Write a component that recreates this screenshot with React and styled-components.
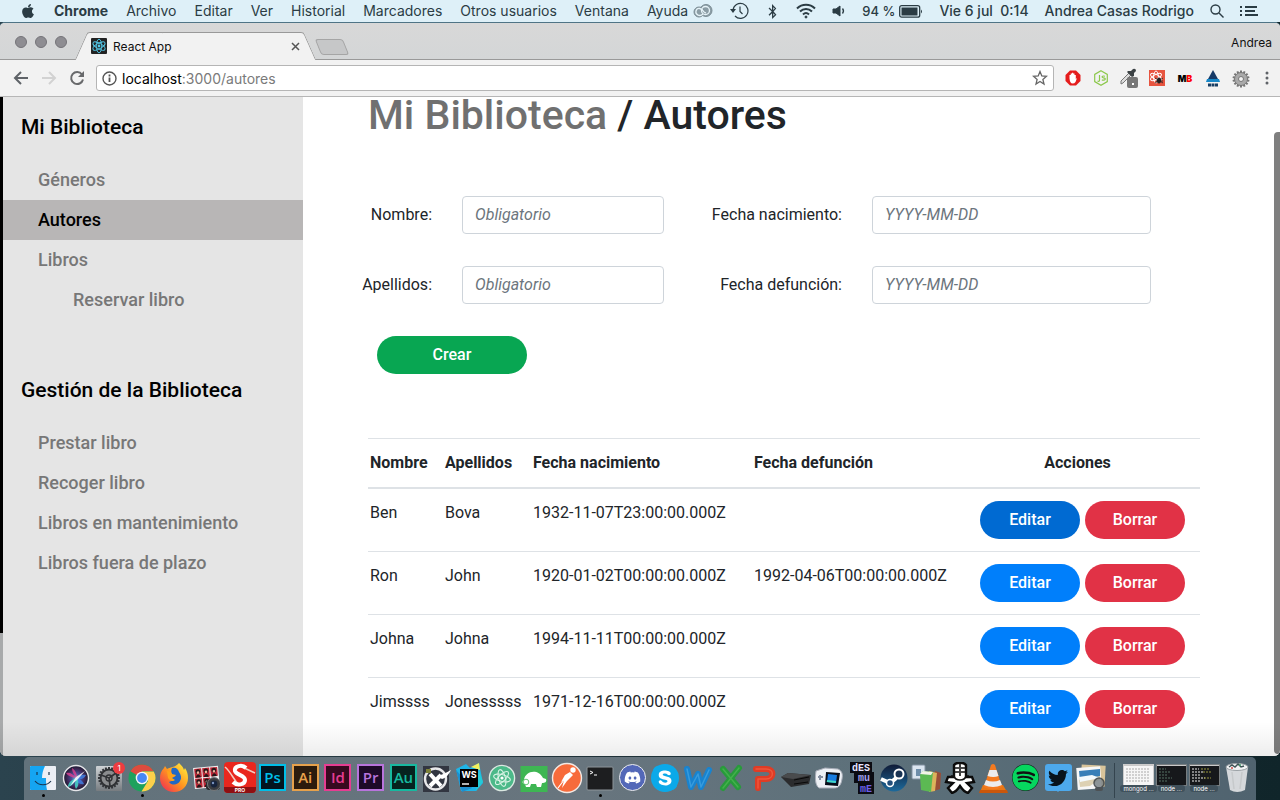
import React from "react";
import styled, { createGlobalStyle, css } from "styled-components";
import { FaApple, FaBluetoothB, FaDiscord, FaSkype, FaSpotify, FaTwitter } from "react-icons/fa";

const uiFont = `Inter, "Liberation Sans", sans-serif`;
const pageFont = `Roboto, "Liberation Sans", sans-serif`;

const GlobalStyle = createGlobalStyle`
  *, *::before, *::after { box-sizing: border-box; }
  body { margin: 0; background: #22343b; }
  button, input { font: inherit; }
  a { color: inherit; text-decoration: none; }
`;

const Desktop = styled.div`
  display: flex;
  flex-direction: column;
  min-height: 100vh;
  overflow: hidden;
  font-family: ${uiFont};
  background: linear-gradient(90deg, #2b434e, #22343b 40%, #10252a);
`;

/* ---------- system menu bar ---------- */

const MenuBar = styled.header`
  display: flex;
  justify-content: space-between;
  align-items: center;
  height: 22px;
  padding: 0 22px 0 20px;
  background: #def0f8;
  color: #2b3c44;
  font-size: 14px;
  font-weight: 500;
  line-height: 22px;
  white-space: nowrap;
  svg { display: block; flex: none; }
`;

const MenuGroup = styled.nav`
  display: flex;
  align-items: center;
  gap: ${(p) => p.$gap}px;
`;

const MenuItem = styled.button`
  padding: 0;
  border: 0;
  background: none;
  color: inherit;
  line-height: 22px;
  font-weight: ${(p) => p.$weight || 500};
`;

const Battery = styled.span`
  display: flex;
  align-items: center;
  gap: 4px;
  font-size: 13px;
`;

/* ---------- browser window ---------- */

const BrowserWindow = styled.div`
  position: relative;
  display: flex;
  flex: 1;
  flex-direction: column;
  margin-bottom: 1px;
  overflow: hidden;
  border-top: 1px solid #4f7486;
  border-radius: 5px 5px 6px 6px;
  background: #f2f2f2;
`;

const TabStrip = styled.div`
  display: flex;
  align-items: flex-end;
  height: 37px;
  padding-left: 15px;
  border-bottom: 1px solid #999;
  background: linear-gradient(#d8d8d8, #d4d6d7);
`;

const Lights = styled.div`
  display: flex;
  gap: 8px;
  margin-bottom: 11px;
  span {
    width: 12px;
    height: 12px;
    border: 1px solid #747378;
    border-radius: 50%;
    background: #8e8d92;
  }
`;

const Tab = styled.div`
  position: relative;
  display: flex;
  align-items: center;
  width: 229px;
  height: 28px;
  margin: 0 0 -1px 14px;
  padding: 0 8px 0 10px;
  font-size: 12px;
  &::before, &::after {
    content: "";
    position: absolute;
    top: 0;
    bottom: 0;
    width: 62%;
    border-top: 1px solid #999;
    background: #f2f2f2;
  }
  &::before { left: 0; border-left: 1px solid #999; border-top-left-radius: 3px; transform: skewX(-24deg); }
  &::after { right: 0; border-right: 1px solid #999; border-top-right-radius: 3px; transform: skewX(24deg); }
  > * { position: relative; z-index: 1; }
`;

const TabTitle = styled.span`
  flex: 1;
  margin-left: 6px;
  color: #111;
`;

const BareButton = styled.button`
  display: grid;
  place-items: center;
  flex: none;
  width: ${(p) => p.$w || 16}px;
  height: ${(p) => p.$h || 16}px;
  padding: 0;
  border: 0;
  background: none;
  svg { display: block; }
`;

const NewTab = styled.button`
  width: 28px;
  height: 16px;
  margin: 0 0 4px 8px;
  padding: 0;
  border: 1px solid #a5a5a5;
  border-radius: 3px;
  background: #c6c7c8;
  transform: skewX(22deg);
`;

const Profile = styled.span`
  margin: 0 8px 8px auto;
  color: #111;
  font-size: 12px;
  line-height: 16px;
`;

const Toolbar = styled.div`
  display: flex;
  align-items: center;
  height: 37px;
  padding: 0 7px 0 12px;
  border-bottom: 1px solid #b6b6b6;
  background: #f2f2f2;
`;

const NavButtons = styled.div`
  display: flex;
  gap: 10px;
  margin-right: 10px;
`;

const Address = styled.div`
  display: flex;
  flex: 1;
  align-items: center;
  height: 26px;
  padding: 0 5px;
  border: 1px solid #b5b5b5;
  border-radius: 3px;
  background: #fff;
  font-size: 14px;
`;

const Url = styled.span`
  flex: 1;
  margin-left: 5px;
  color: #7a7a7a;
  b { color: #000; font-weight: 400; }
`;

const Extensions = styled.div`
  display: flex;
  align-items: center;
  gap: 8px;
  margin: 0 -2px 0 9px;
`;

const MbBadge = styled.span`
  color: #000;
  font-size: 9px;
  font-weight: 900;
  b { color: #f00; font-weight: 900; }
`;

/* ---------- web page ---------- */

const Page = styled.div`
  position: relative;
  display: flex;
  flex: 1;
  padding-left: 3px;
  background: linear-gradient(#000 81.3%, #a8aaab 81.3%);
  font-family: ${pageFont};
  font-size: 16px;
  line-height: 24px;
  color: #212529;
  &::after {
    content: "";
    position: absolute;
    inset: auto 0 0 0;
    height: 34px;
    background: linear-gradient(transparent, rgba(0, 0, 0, 0.07));
    pointer-events: none;
  }
`;

const Sidebar = styled.aside`
  flex: none;
  width: 300px;
  background: #e5e5e5;
`;

const SideSection = styled.nav`
  margin-bottom: 40px;
  ul { margin: 0; padding: 0; list-style: none; }
`;

const SideHeading = styled.h2`
  margin: 0;
  padding: 0 18px 3px;
  color: #000;
  font-size: 21px;
  font-weight: 500;
  line-height: 60px;
`;

const SideLink = styled.a`
  display: block;
  padding-left: ${(p) => (p.$nested ? 70 : 35)}px;
  font-size: 18px;
  font-weight: 500;
  line-height: 40px;
  color: ${(p) => (p.$active ? "#000" : "#777")};
  background: ${(p) => (p.$active ? "#b8b6b6" : "transparent")};
`;

const Main = styled.main`
  flex: 1;
  min-width: 0;
  padding: 0 80px 12px 59px;
  background: #fff;
`;

const Title = styled.h1`
  margin: 0 0 63px 6px;
  font-size: 41px;
  font-weight: 500;
  line-height: 36px;
  a { color: #707070; }
`;

const Form = styled.form`
  display: grid;
  grid-template-columns: 70px minmax(0, 202px) 148px minmax(0, 279px);
  gap: 32px 30px;
  align-items: center;
`;

const Label = styled.label`
  text-align: right;
  white-space: nowrap;
`;

const Field = styled.input`
  width: 100%;
  height: 38px;
  padding: 0 12px 2px;
  border: 1px solid #ced4da;
  border-radius: 4px;
  background: #fff;
  color: #495057;
  &::placeholder { color: #6c757d; font-style: italic; opacity: 1; }
`;

const tones = {
  green: "#08a652",
  blue: "#007ffb",
  focus: "#006ad2",
  red: "#e13246",
};

const Pill = styled.button`
  width: ${(p) => (p.$wide ? 150 : 100)}px;
  height: 38px;
  padding: 0;
  border: 0;
  border-radius: 19px;
  background: ${(p) => tones[p.$tone]};
  color: #fff;
  font-weight: 500;
  ${(p) => p.$wide && css`
    grid-column: 1 / -1;
    margin-left: 15px;
  `}
`;

const Table = styled.table`
  width: calc(100% - 6px);
  margin: 64px 0 0 6px;
  border-spacing: 0;
  table-layout: fixed;
  white-space: nowrap;
  th, td {
    padding: 12px 2px;
    border-top: 1px solid #dee2e6;
    text-align: left;
    vertical-align: top;
  }
  th { border-bottom: 2px solid #dee2e6; font-weight: 700; }
  th:last-child { padding-right: 12px; text-align: center; }
  tbody tr:first-child td { border-top: 0; }
`;

const Col = styled.col`
  width: ${(p) => (p.$w ? `${p.$w}px` : "auto")};
`;

const Actions = styled.div`
  display: flex;
  justify-content: center;
  gap: 5px;
`;

const ScrollThumb = styled.div`
  position: absolute;
  top: 35px;
  right: 0;
  bottom: 2px;
  width: 6px;
  border-radius: 4px 0 0 4px;
  background: #7f7f7f;
`;

/* ---------- dock ---------- */

const DockBar = styled.footer`
  display: flex;
  height: 43px;
  margin: 0 24px;
  padding: 0 3px;
  border-radius: 5px 5px 0 0;
  background: linear-gradient(90deg, #62727b, #68757e 45%, #5c707a 70%, #50636f);
`;

const DockItem = styled.div`
  position: relative;
  display: flex;
  flex: 1 1 0;
  justify-content: center;
  padding-top: 5px;
  min-width: 0;
  > svg { flex: none; width: 32px; height: 32px; }
  ${(p) => p.$running && css`
    &::after {
      content: "";
      position: absolute;
      bottom: 3px;
      left: 50%;
      width: 3px;
      height: 3px;
      margin-left: -1px;
      border-radius: 50%;
      background: #000;
    }
  `}
`;

const DockDivider = styled.div`
  width: 1px;
  margin: 6px 7px 2px;
  background: #34444e;
`;

const AdobeTile = styled.span`
  width: 27px;
  height: 27px;
  margin-top: 2px;
  border: 2px solid ${(p) => p.$fg};
  background: ${(p) => p.$bg};
  color: ${(p) => p.$fg};
  font-family: "Open Sans", sans-serif;
  font-size: 15px;
  font-weight: 600;
  line-height: 22px;
  text-align: center;
`;

const DockBadge = styled.span`
  position: absolute;
  top: 5px;
  right: 0;
  width: 12px;
  height: 12px;
  border-radius: 50%;
  background: #ee3c40;
  color: #fff;
  font-size: 8px;
  line-height: 12px;
  text-align: center;
`;

const Round = styled.span`
  display: grid;
  place-items: center;
  width: 27px;
  height: 27px;
  margin-top: 2px;
  border: ${(p) => (p.$ring ? 1 : 0)}px solid #eee;
  border-radius: ${(p) => (p.$square ? 3 : 14)}px;
  background: ${(p) => p.$bg};
  color: #fff;
  svg { display: block; }
`;

const SpeechTail = styled.span`
  position: absolute;
  top: 31px;
  border: 4px solid transparent;
  border-top-color: #4da9ec;
`;

const SkypeTile = styled.span`
  display: grid;
  place-items: center;
  width: 28px;
  height: 28px;
  margin-top: 2px;
  border-radius: 50%;
  background: radial-gradient(#fff 50%, #0ba9e9 52%);
  svg { display: block; }
`;

const MiniWindow = styled.span`
  display: flex;
  flex-direction: column;
  align-items: center;
  width: 31px;
  padding-top: 2px;
  svg { display: block; width: 31px; height: 22px; }
  small {
    margin-top: -1px;
    padding: 0 3px;
    border-radius: 3px;
    background: #40515c;
    color: #fff;
    font-size: 6px;
    line-height: 7px;
    white-space: nowrap;
  }
`;

/* ---------- drawings ---------- */

const ReactMark = ({ size = 16, bg = "#222", fg = "#53c8e8" }) => (
  <svg width={size} height={size} viewBox="0 0 16 16">
    <rect width="16" height="16" rx="1" fill={bg} />
    <g fill="none" stroke={fg} strokeWidth="0.9">
      {[30, 90, 150].map((a) => (
        <ellipse key={a} cx="8" cy="8" rx="6.8" ry="2.7" transform={`rotate(${a} 8 8)`} />
      ))}
    </g>
    <circle cx="8" cy="8" r="1.4" fill={fg} />
  </svg>
);

const gear = (cx, cy, r, n) =>
  Array.from({ length: n }, (_, i) => (
    <rect key={i} x={cx - 1} y={cy - r} width="2" height="3" transform={`rotate(${(i * 360) / n} ${cx} ${cy})`} />
  ));

const Finder = () => (
  <svg viewBox="0 0 32 32">
    <rect x="3" y="4" width="26" height="24" rx="1" fill="#eceff5" />
    <path d="M4 4h14c-2 4-3 8-3 12h4c0 4 0 8 1 12H4a1 1 0 0 1-1-1V5a1 1 0 0 1 1-1z" fill="#15a5f2" />
    <path d="M10 10v3M22 10v3M8 19c4 5 12 5 16 0" fill="none" stroke="#18344e" strokeWidth="1.2" />
  </svg>
);

const Siri = () => (
  <svg viewBox="0 0 32 32">
    <defs>
      <radialGradient id="siri">
        <stop offset="0" stopColor="#7fc4e0" /><stop offset=".35" stopColor="#4a4f9a" /><stop offset=".75" stopColor="#3a2450" /><stop offset="1" stopColor="#151a2c" />
      </radialGradient>
    </defs>
    <circle cx="16" cy="16" r="12.5" fill="url(#siri)" stroke="#e6e6ea" strokeWidth="1.4" />
    <path d="M6 11c4-1 7 1 10 5-5-1-8-2-10-5zM12 6c3 2 5 5 5 10-3-3-5-6-5-10z" fill="#d8418f" opacity=".85" />
    <path d="M26 13c-2 4-5 5-10 4 3-3 6-5 10-4zM24 22c-4 1-7-1-8-6 4 1 7 3 8 6z" fill="#3f7de0" opacity=".85" />
    <path d="M8 25c0-4 3-7 8-9-1 5-4 8-8 9zM16 27c-2-4-1-7 1-11 2 4 2 8-1 11z" fill="#45d6c8" opacity=".85" />
    <path d="M10 24l6-9 9-6-7 8z" fill="#fff" opacity=".85" />
  </svg>
);

const Settings = () => (
  <svg viewBox="0 0 32 32">
    <defs><linearGradient id="prefs" x1="0" y1="0" x2="0" y2="1"><stop stopColor="#cfd3d6" /><stop offset="1" stopColor="#777c80" /></linearGradient></defs>
    <rect x="3" y="4" width="26" height="25" rx="1" fill="url(#prefs)" />
    <g fill="#33363a">{gear(16, 16, 11, 20)}</g>
    <circle cx="16" cy="16" r="8.5" fill="#8a8c8e" stroke="#303235" strokeWidth="2" />
    <circle cx="16" cy="16" r="3" fill="#999" stroke="#303235" strokeWidth="1.4" />
    <path d="M16 16L8 13M16 16l7-5M16 16l1 8" stroke="#303235" strokeWidth="1.7" />
  </svg>
);

const Chrome = () => (
  <svg viewBox="0 0 32 32">
    <circle cx="16" cy="16" r="13.5" fill="#1ea15d" />
    <path d="M16 16L4.3 9.3A13.5 13.5 0 0 1 27.7 9.3H16z" fill="#dd4b3e" />
    <path d="M16 9.5h11.8A13.5 13.5 0 0 1 15.5 29.5L22 19z" fill="#fdd04b" />
    <circle cx="16" cy="16" r="6.3" fill="#f5f5f5" />
    <circle cx="16" cy="16" r="4.9" fill="#4688f4" />
  </svg>
);

const Firefox = () => (
  <svg viewBox="0 0 32 32">
    <defs><linearGradient id="fox" x1="1" y1="0" x2="0" y2="1"><stop offset=".1" stopColor="#ffe53a" /><stop offset=".5" stopColor="#ff9420" /><stop offset="1" stopColor="#ee1f5b" /></linearGradient></defs>
    <path d="M21 1c3 3 4 4 5 7l1-2c2 3 3 6 3 10 0 8-6 14-14 14S2 24 2 16c0-4 1-7 4-10l1-2 2 3c4-2 9-2 12-6z" fill="url(#fox)" />
    <path d="M14 6c4-1 6 1 7 4 2 3 3 6 1 9-2 4-8 5-11 1l5-2c-3 0-5-2-5-4l3-2c-1-2-1-4 0-6z" fill="#2268c4" />
    <path d="M9 9c3 0 4 1 5 3l4 1c-1 2-3 2-4 3l3 2c-2 2-5 1-7-2z" fill="#ffa21c" />
  </svg>
);

const PhotoBooth = () => (
  <svg viewBox="0 0 32 32">
    <g transform="rotate(-5 14 16)">
      <rect x="3" y="5" width="25" height="21" fill="#eee" />
      {[[4, 6], [12, 6], [20, 6], [4, 16], [12, 16]].map(([x, y]) => (
        <g key={`${x}-${y}`}><rect x={x} y={y} width="7" height="9" fill="#bd2635" /><circle cx={x + 3.5} cy={y + 3} r="2.4" fill="#241719" /><circle cx={x + 3.5} cy={y + 4} r="1.3" fill="#edb49d" /><path d={`M${x + 1} ${y + 9}c1-4 4-4 5 0z`} fill="#241719" /></g>
      ))}
    </g>
    <rect x="15" y="18" width="14" height="10" rx="3" fill="#292b2e" />
    <circle cx="23" cy="22" r="6.5" fill="#3a3c40" stroke="#76797c" />
    <circle cx="23" cy="22" r="3.4" fill="#17243d" /><circle cx="22" cy="21" r="1.2" fill="#7994c0" />
  </svg>
);

const SketchPro = () => (
  <svg viewBox="0 0 32 32">
    <rect x="0" y="0" width="32" height="31" rx="4" fill="#e9271e" />
    <path d="M0 25h32v2a4 4 0 0 1-4 4H4a4 4 0 0 1-4-4z" fill="#8f0f12" />
    <path d="M1 5c6 5 8 12 14 18M18 5l13 6" stroke="#f3ccc0" strokeWidth="1.5" fill="none" />
    <path d="M22 6c-4-4-12-2-11 3 1 4 10 4 10 9 0 5-8 6-12 2" stroke="#fff" strokeWidth="4" fill="none" />
    <text x="16" y="30" fill="#fff" fontSize="5" fontWeight="700" textAnchor="middle" fontFamily="Inter, sans-serif">PRO</text>
  </svg>
);

const Xmark = () => (
  <svg viewBox="0 0 32 32">
    <rect x="3" y="4" width="26" height="26" fill="#323641" />
    <circle cx="15.5" cy="17" r="10.5" fill="none" stroke="#e8e8ea" strokeWidth="2.4" />
    <path d="M10 12l11 12M21 13L10 24" stroke="#fff" strokeWidth="4" />
    <path d="M17 14c5-1 9-3 14-6-2 4-5 8-9 9z" fill="#fff" />
    <rect x="6" y="7" width="5" height="4" fill="#7d8138" />
  </svg>
);

const WebStorm = () => (
  <svg viewBox="0 0 32 32">
    <path d="M3 7l10-5 4 4 9-5 4 20-7 8H8z" fill="#1fb4e6" /><path d="M18 5l8-4 1 7z" fill="#f3f05b" /><path d="M3 8l6 22 10-4z" fill="#1c8fd0" /><path d="M26 8l4 12-7 9z" fill="#23cbd7" />
    <rect x="7" y="7" width="18" height="18" fill="#000" />
    <text x="16" y="16" fill="#fff" fontSize="9" fontWeight="700" textAnchor="middle" fontFamily="Inter, sans-serif">WS</text>
    <path d="M9 22h7" stroke="#fff" strokeWidth="1.4" />
  </svg>
);

const Atom = () => (
  <svg viewBox="0 0 32 32">
    <circle cx="16" cy="16" r="12.6" fill="#4cb989" stroke="#dce9e2" strokeWidth="1.4" />
    <g fill="none" stroke="#d9f3e5" strokeWidth="1.1">{[15, 75, 135].map((a) => <ellipse key={a} cx="16" cy="16" rx="8.6" ry="3.4" transform={`rotate(${a} 16 16)`} />)}</g>
    <circle cx="16" cy="16" r="1.6" fill="#fff" />
  </svg>
);

const Tortoise = () => (
  <svg viewBox="0 0 32 32">
    <rect x="2.5" y="4" width="27" height="26" fill="#3eb653" />
    <path d="M6 18c1-9 14-12 19-2l3 1c1 3-1 4-4 4l-1 4h-4l-1-3h-5l-1 3H8l-1-3c-3 0-3-3-1-4z" fill="#fff" />
    <circle cx="8" cy="20" r="2.8" fill="#fff" stroke="#3eb653" strokeWidth=".8" />
  </svg>
);

const Postman = () => (
  <svg viewBox="0 0 32 32">
    <circle cx="16" cy="16" r="14.5" fill="#f76b3b" stroke="#f3e9e4" strokeWidth="1.4" />
    <circle cx="22" cy="8" r="2.7" fill="#fff" />
    <path d="M19 10l3 3-6 6-5 7 2-8-3 2 4-7z" fill="#fff" /><path d="M13 18l-6 8M20 13l-7 6" stroke="#fff" strokeWidth="1.2" />
  </svg>
);

const Terminal = () => (
  <svg viewBox="0 0 32 32">
    <rect x="3" y="5" width="26" height="23" rx="1" fill="#1d1e20" stroke="#8e959a" />
    <path d="M6 9l3 1.5-3 1.5M10 13h3" stroke="#fff" fill="none" />
  </svg>
);

const Letter = ({ kind }) => {
  const shapes = {
    W: ["#1883cf", "#56b4ec", "M5 7l4 18 7-13 3 13 8-17"],
    X: ["#289b3b", "#5ec85b", "M8 7l15 18M24 6L8 26"],
    P: ["#e03c25", "#fb7253", "M8 7h10c9 0 8 10 0 10h-8v9"],
  };
  const [dark, light, d] = shapes[kind];
  return (
    <svg viewBox="0 0 32 32" fill="none" strokeLinejoin="round" strokeLinecap="round">
      <path d={d} stroke={dark} strokeWidth="6" /><path d={d} stroke={light} strokeWidth="1.5" opacity=".5" />
    </svg>
  );
};

const BlackBox = () => (
  <svg viewBox="0 0 32 32"><path d="M1 15l7-4 23 2-2 9-18 3z" fill="#2b2c2e" /><path d="M1 15l7-4 23 2-18 4z" fill="#494b4d" /><path d="M14 18l15-3M14 22l14-2" stroke="#090909" /></svg>
);

const GameBoy = () => (
  <svg viewBox="0 0 32 32">
    <path d="M3 9l9-3 13 1c4 2 5 5 4 10-1 7-4 9-8 9H6c-4-3-4-10-3-17z" fill="#edf0f5" stroke="#a8adb8" />
    <path d="M13 10l14 1-2 13-13-1z" fill="#080d19" /><path d="M15 12l9 1-1 8-9-1z" fill="#167be0" /><path d="M14 18l9 1-.3 2-9-1z" fill="#44d8c5" />
    <path d="M7 13v5M5 15h5" stroke="#8690a2" strokeWidth="2" />
  </svg>
);

const Desmume = () => (
  <svg viewBox="0 0 32 32" fontFamily="Liberation Mono, monospace" fontWeight="700" textAnchor="middle">
    <path d="M4 0h22v10h2v22H12V21H8V11H4z" fill="#0b0b12" />
    <text x="15" y="9" fill="#e6e4ff" fontSize="10">dES</text><text x="18" y="19" fill="#a8a1f0" fontSize="10">mu</text><text x="20" y="30" fill="#6d60ea" fontSize="10">mE</text>
  </svg>
);

const Steam = () => (
  <svg viewBox="0 0 32 32">
    <defs><linearGradient id="steam" x1="0" y1="0" x2="0" y2="1"><stop stopColor="#101b37" /><stop offset="1" stopColor="#1d6a9c" /></linearGradient></defs>
    <circle cx="16" cy="16" r="13.5" fill="url(#steam)" />
    <path d="M3 17l9 4 5-4 3-4" stroke="#fff" strokeWidth="4" fill="none" />
    <circle cx="21" cy="12" r="4.5" fill="#183354" stroke="#fff" strokeWidth="2" /><circle cx="12" cy="21" r="3.5" fill="#224f7c" stroke="#fff" strokeWidth="1.5" />
  </svg>
);

const Books = () => (
  <svg viewBox="0 0 32 32">
    <rect x="1" y="3" width="13" height="14" rx="1" fill="#dbe5f0" stroke="#8291a1" /><rect x="5" y="7" width="5" height="7" fill="#6f8eaa" />
    <path d="M24 9l6 2-1 16-6 2z" fill="#994e37" /><path d="M18 9l8 2-2 18-6 1z" fill="#dcb35b" />
    <path d="M9 13l3-4 10 1-2 20-10-2z" fill="#5cb953" /><path d="M12 9l10 1-2 3-11-1z" fill="#f3f3e8" />
  </svg>
);

const BeardedSpice = () => (
  <svg viewBox="0 0 32 32">
    <path d="M10 3c2-3 10-3 12 0v12h6l2 5-7 1 5 5-4 5c-4-1-6-4-8-7-2 3-4 6-8 7l-4-5 5-5-7-1 2-5h6z" fill="#fff" stroke="#0b0b0b" strokeWidth="2.4" />
    <path d="M10 6h5M17 6h5M10 10h5M17 10h5M7 14h3q1 4 6 4t6-4h3M16 1v13" stroke="#111" strokeWidth="1.6" fill="none" />
  </svg>
);

const Vlc = () => (
  <svg viewBox="0 0 32 32">
    <path d="M6 23h20l4 7H3z" fill="#e97716" /><path d="M14 3q2-2 4 0l7 22q-9 5-18 0z" fill="#f47a1f" />
    <path d="M12.5 8h7l2 6q-5 2-11 0zM9 18q7 3 14 0l2 5q-9 4-18 0z" fill="#ececec" /><path d="M3 28h27l1 3H2z" fill="#ca570b" />
  </svg>
);

const Preview = () => (
  <svg viewBox="0 0 32 32">
    <rect x="6" y="3" width="24" height="21" fill="#d9c49a" transform="rotate(3 16 16)" /><rect x="2" y="5" width="24" height="22" fill="#f7f7f7" transform="rotate(-4 16 16)" />
    <path d="M4 9l21-2v10L5 19z" fill="#397fb8" /><path d="M4 18l21-4v3l-10 7-10 1z" fill="#ddd1b3" /><path d="M4 15l13-2 8 3-20 4z" fill="#f4fafd" />
    <circle cx="24" cy="21" r="5" fill="#7b8387" opacity=".85" stroke="#3a4044" strokeWidth="1.5" /><rect x="20" y="25" width="8" height="4" rx="2" fill="#4d5255" />
  </svg>
);

const Trash = () => (
  <svg viewBox="0 0 32 32">
    <path d="M5 5h22l-3 23q-8 4-15 0z" fill="#dcdee0" opacity=".95" /><path d="M11 10l2 17M21 10l-2 17" stroke="#c6c9cb" strokeWidth="1.5" />
    <ellipse cx="16" cy="5" rx="11" ry="3.5" fill="#f3f4f5" stroke="#9ba1a5" /><path d="M8 5l3-2 3 2 3-3 3 3 3-1" stroke="#3f5356" fill="none" strokeWidth="1.5" /><circle cx="19" cy="3" r="1" fill="#43a36b" /><circle cx="11" cy="6" r="1" fill="#ce4e49" />
  </svg>
);

const Thumb = ({ light, label, tinted }) => (
  <MiniWindow>
    <svg viewBox="0 0 31 22">
      <rect x=".5" y=".5" width="30" height="21" fill={light ? "#f6f6f6" : "#16181b"} stroke={light ? "#ccc" : "#777d80"} />
      <path d="M1 1.5h29" stroke="#c9c9c9" />
      {[5, 8, 11, 14, 17].map((y, i) => (
        <path key={y} d={`M3 ${y}h${light ? 24 : 7 + ((i * 5) % 9)}`} stroke={light ? "#aaa" : tinted ? "#eee" : "#557065"} strokeDasharray="2 1" />
      ))}
      {tinted && <path d="M12 5h8M14 8h9M15 14h7" stroke="#98963e" strokeDasharray="2 1" />}
    </svg>
    <small>{label}</small>
  </MiniWindow>
);

/* ---------- data ---------- */

const menus = ["Archivo", "Editar", "Ver", "Historial", "Marcadores", "Otros usuarios", "Ventana", "Ayuda"];

const authors = [
  ["Ben", "Bova", "1932-11-07T23:00:00.000Z", ""],
  ["Ron", "John", "1920-01-02T00:00:00.000Z", "1992-04-06T00:00:00.000Z"],
  ["Johna", "Johna", "1994-11-11T00:00:00.000Z", ""],
  ["Jimssss", "Jonesssss", "1971-12-16T00:00:00.000Z", ""],
];

const dock = [
  { el: <Finder />, running: true },
  { el: <Siri /> },
  { el: <><Settings /><DockBadge>1</DockBadge></> },
  { el: <Chrome />, running: true },
  { el: <Firefox /> },
  { el: <PhotoBooth /> },
  { el: <SketchPro /> },
  { el: <AdobeTile $fg="#00bfe8" $bg="#03151f">Ps</AdobeTile> },
  { el: <AdobeTile $fg="#e6a14c" $bg="#2b1b0d">Ai</AdobeTile> },
  { el: <AdobeTile $fg="#e63d92" $bg="#370a20">Id</AdobeTile> },
  { el: <AdobeTile $fg="#b874dc" $bg="#1d0a29">Pr</AdobeTile> },
  { el: <AdobeTile $fg="#17b9a0" $bg="#06231f">Au</AdobeTile> },
  { el: <Xmark /> },
  { el: <WebStorm /> },
  { el: <Atom /> },
  { el: <Tortoise /> },
  { el: <Postman /> },
  { el: <Terminal />, running: true },
  { el: <Round $bg="#5368b8" $ring><FaDiscord size={17} /></Round> },
  { el: <SkypeTile><FaSkype size={28} color="#0ba9e9" /></SkypeTile> },
  { el: <Letter kind="W" /> },
  { el: <Letter kind="X" /> },
  { el: <Letter kind="P" /> },
  { el: <BlackBox /> },
  { el: <GameBoy /> },
  { el: <Desmume /> },
  { el: <Steam /> },
  { el: <Books /> },
  { el: <BeardedSpice /> },
  { el: <Vlc /> },
  { el: <Round $bg="#111"><FaSpotify size={27} color="#06d65f" /></Round> },
  { el: <><Round $bg="#4da9ec" $square><FaTwitter size={20} color="#08131c" /></Round><SpeechTail /></> },
  { el: <Preview /> },
];

/* ---------- components ---------- */

function SystemBar() {
  return (
    <MenuBar>
      <MenuGroup $gap={18}>
        <FaApple size={16} />
        <MenuItem $weight={700}>Chrome</MenuItem>
        {menus.map((m) => <MenuItem key={m} $weight={400}>{m}</MenuItem>)}
      </MenuGroup>
      <MenuGroup $gap={16}>
        <svg width="20" height="16" viewBox="0 0 20 16" fill="none" stroke="#7c8e96">
          <circle cx="13" cy="7.5" r="6" fill="#8b9da5" /><circle cx="6" cy="9" r="5" fill="#8b9da5" />
          <circle cx="12.5" cy="7.5" r="4" stroke="#e6f3f8" strokeWidth="1.3" /><path d="M10 11C7 14 2 12 3 8s6-3 8 1l2 1" stroke="#e6f3f8" strokeWidth="1.3" />
        </svg>
        <svg width="20" height="18" viewBox="0 0 20 18" fill="none" stroke="currentColor" strokeWidth="1.2">
          <path d="M4 8a7.500 7.500 0 1 1 2 6M11 4.500v5l2.500 2.500" /><path d="M1 7l3 4 3-4z" fill="currentColor" stroke="none" />
        </svg>
        <FaBluetoothB size={15} />
        <svg width="20" height="16" viewBox="0 0 20 16" fill="none" stroke="currentColor" strokeWidth="2">
          <path d="M1 5.5c5-5 13-5 18 0M4 8.500c3.500-3.500 8.500-3.500 12 0M7 11.500c2-2 4-2 6 0" /><circle cx="10" cy="14" r="1" fill="currentColor" strokeWidth="1" />
        </svg>
        <svg width="14" height="14" viewBox="0 0 14 14" fill="none" stroke="currentColor">
          <path d="M1 5h3l4-3v10l-4-3H1z" fill="currentColor" /><path d="M10.5 4.5q2 2.500 0 5" strokeWidth="1.3" />
        </svg>
        <Battery>
          94 %
          <svg width="24" height="13" viewBox="0 0 24 13"><rect x=".7" y=".7" width="20" height="11.5" rx="2" fill="none" stroke="currentColor" strokeWidth="1.3" /><rect x="2.5" y="2.5" width="16" height="8" fill="currentColor" /><path d="M22 4.500q2 2 0 4z" fill="currentColor" /></svg>
        </Battery>
        <MenuItem>Vie 6 jul&nbsp; 0:14</MenuItem>
        <MenuItem>Andrea Casas Rodrigo</MenuItem>
        <svg width="14" height="14" viewBox="0 0 14 14" fill="none" stroke="currentColor" strokeWidth="1.4"><circle cx="5.5" cy="5.5" r="4.5" /><path d="M9 9l4.500 4.500" /></svg>
        <svg width="18" height="12" viewBox="0 0 18 12" stroke="currentColor" strokeWidth="2"><path d="M0 2h2M5 2h12M0 6h2M5 6h10M0 10h2M5 10h13" /></svg>
      </MenuGroup>
    </MenuBar>
  );
}

function BrowserChrome() {
  return (
    <>
      <TabStrip>
        <Lights><span /><span /><span /></Lights>
        <Tab>
          <ReactMark />
          <TabTitle>React App</TabTitle>
          <BareButton aria-label="Cerrar" $w={14}>
            <svg width="9" height="9" viewBox="0 0 9 9" stroke="#555" strokeWidth="1.5"><path d="M1 1l7 7M8 1L1 8" /></svg>
          </BareButton>
        </Tab>
        <NewTab aria-label="Nueva" />
        <Profile>Andrea</Profile>
      </TabStrip>
      <Toolbar>
        <NavButtons>
          <BareButton $w={18} $h={18} aria-label="Atrás"><svg width="16" height="14" viewBox="0 0 16 14" fill="none" stroke="#5f6368" strokeWidth="2"><path d="M8 1L2 7l6 6M2 7h13" /></svg></BareButton>
          <BareButton $w={18} $h={18} aria-label="Adelante"><svg width="16" height="14" viewBox="0 0 16 14" fill="none" stroke="#d2d2d2" strokeWidth="2"><path d="M8 1l6 6-6 6M14 7H1" /></svg></BareButton>
          <BareButton $w={18} $h={18} aria-label="Recargar"><svg width="16" height="16" viewBox="0 0 16 16" fill="none" stroke="#68696b" strokeWidth="2"><path d="M13 4.500A6 6 0 1 0 14 9.500" /><path d="M15 1v6H9z" fill="#68696b" stroke="none" /></svg></BareButton>
        </NavButtons>
        <Address>
          <svg width="15" height="15" viewBox="0 0 15 15" fill="none" stroke="#555" strokeWidth="1.4"><circle cx="7.5" cy="7.5" r="6.5" /><path d="M7.500 6.500V11M7.500 3.500v2" strokeWidth="1.8" /></svg>
          <Url><b>localhost</b>:3000/autores</Url>
          <svg width="16" height="16" viewBox="0 0 16 16" fill="none" stroke="#666" strokeWidth="1.3"><path d="M8 1.500l1.800 4.400 4.700.4-3.600 3.100 1.100 4.600L8 11.500 4 14l1.100-4.600-3.600-3.100 4.700-.4z" /></svg>
        </Address>
        <Extensions>
          <BareButton $w={20} aria-label="Bloqueador"><svg width="16" height="16" viewBox="0 0 16 16"><path d="M5 .5h6L15.500 5v6L11 15.500H5L.5 11V5z" fill="#e51d1d" /><path d="M4.500 8.500V5h1.200V3.500h1.300V2.700h1.200v.8h1.300V5h1.300v4l1.200-1-1.500 4q-1 1.500-3 1.500-2.500 0-3-5z" fill="#fff" /></svg></BareButton>
          <BareButton $w={20} aria-label="Node"><svg width="16" height="16" viewBox="0 0 16 16" fill="none" stroke="#8cc84b" strokeWidth="1.2"><path d="M8 .8l6.300 3.600v7.200L8 15.200l-6.300-3.600V4.400z" /><path d="M6.500 5v5q0 2-2 1M12 6.300c-3-1-4 1-1.500 1.500 3 .5 2 3-1.700 2.200" /></svg></BareButton>
          <BareButton $w={20} $h={22} aria-label="Cuentagotas"><svg width="20" height="20" viewBox="0 0 20 20"><path d="M2 13l8-8 2 2-8 8-2 1z" fill="#ddd" stroke="#777" /><path d="M9 3l3 0 2-2q3-1 3 2l-2 2 0 3-2 1-5-5z" fill="#3b4144" /><rect x="8" y="9" width="11" height="11" rx="2" fill="#777" /><rect x="13" y="15" width="2" height="2" fill="#fff" /></svg></BareButton>
          <BareButton $w={20} aria-label="React"><svg width="16" height="16" viewBox="0 0 16 16"><rect width="16" height="16" fill="#e7543f" /><g fill="none" stroke="#fff">{[30, 90, 150].map((a) => <ellipse key={a} cx="7" cy="7" rx="6" ry="2.4" transform={`rotate(${a} 7 7)`} />)}</g><ellipse cx="10" cy="10.500" rx="2" ry="3" fill="#222" /><path d="M6 8l8 5M6 13l8-5M7 11h7" stroke="#222" strokeWidth=".8" /></svg></BareButton>
          <BareButton $w={20} aria-label="MB"><MbBadge>M<b>B</b></MbBadge></BareButton>
          <BareButton $w={20} aria-label="Vela"><svg width="16" height="18" viewBox="0 0 16 18"><path d="M8 0l5 9H3z" fill="#163a68" /><path d="M2 9h12l1 3H1z" fill="#1687c8" /><path d="M3 15h10" stroke="#173d63" strokeWidth="3" strokeDasharray="3 .5" /></svg></BareButton>
          <BareButton $w={20} aria-label="Ajustes"><svg width="18" height="18" viewBox="0 0 18 18"><g fill="#777">{gear(9, 9, 8.5, 14)}</g><circle cx="9" cy="9" r="6.5" fill="#aaa" stroke="#777" /><circle cx="9" cy="9" r="2.5" fill="#f2f2f2" stroke="#777" /></svg></BareButton>
          <BareButton $w={16} aria-label="Menú"><svg width="4" height="14" viewBox="0 0 4 14" fill="#5f6368"><circle cx="2" cy="2" r="1.5" /><circle cx="2" cy="7" r="1.5" /><circle cx="2" cy="12" r="1.5" /></svg></BareButton>
        </Extensions>
      </Toolbar>
    </>
  );
}

function SideNav() {
  return (
    <Sidebar>
      <SideSection>
        <SideHeading>Mi Biblioteca</SideHeading>
        <ul>
          <li><SideLink href="#generos">Géneros</SideLink></li>
          <li><SideLink href="#autores" $active>Autores</SideLink></li>
          <li><SideLink href="#libros">Libros</SideLink></li>
          <li><SideLink href="#reservar" $nested>Reservar libro</SideLink></li>
        </ul>
      </SideSection>
      <SideSection>
        <SideHeading>Gestión de la Biblioteca</SideHeading>
        <ul>
          <li><SideLink href="#prestar">Prestar libro</SideLink></li>
          <li><SideLink href="#recoger">Recoger libro</SideLink></li>
          <li><SideLink href="#mantenimiento">Libros en mantenimiento</SideLink></li>
          <li><SideLink href="#plazo">Libros fuera de plazo</SideLink></li>
        </ul>
      </SideSection>
    </Sidebar>
  );
}

function Authors() {
  return (
    <Main>
      <Title><a href="#inicio">Mi Biblioteca</a> / Autores</Title>
      <Form onSubmit={(e) => e.preventDefault()}>
        <Label htmlFor="nombre">Nombre:</Label>
        <Field id="nombre" placeholder="Obligatorio" />
        <Label htmlFor="nacimiento">Fecha nacimiento:</Label>
        <Field id="nacimiento" placeholder="YYYY-MM-DD" />
        <Label htmlFor="apellidos">Apellidos:</Label>
        <Field id="apellidos" placeholder="Obligatorio" />
        <Label htmlFor="defuncion">Fecha defunción:</Label>
        <Field id="defuncion" placeholder="YYYY-MM-DD" />
        <Pill $tone="green" $wide>Crear</Pill>
      </Form>
      <Table>
        <colgroup><Col $w={75} /><Col $w={88} /><Col $w={221} /><Col $w={213} /><Col /></colgroup>
        <thead>
          <tr><th>Nombre</th><th>Apellidos</th><th>Fecha nacimiento</th><th>Fecha defunción</th><th>Acciones</th></tr>
        </thead>
        <tbody>
          {authors.map((row, i) => (
            <tr key={row[0]}>
              {row.map((cell, j) => <td key={j}>{cell}</td>)}
              <td>
                <Actions>
                  <Pill $tone={i === 0 ? "focus" : "blue"}>Editar</Pill>
                  <Pill $tone="red">Borrar</Pill>
                </Actions>
              </td>
            </tr>
          ))}
        </tbody>
      </Table>
    </Main>
  );
}

function Dock() {
  return (
    <DockBar>
      {dock.map((d, i) => <DockItem key={i} $running={d.running}>{d.el}</DockItem>)}
      <DockDivider />
      <DockItem><Thumb light label="mongod ..." /></DockItem>
      <DockItem><Thumb label="node ..." /></DockItem>
      <DockItem><Thumb tinted label="node ..." /></DockItem>
      <DockItem><Trash /></DockItem>
    </DockBar>
  );
}

export default function App() {
  return (
    <Desktop>
      <GlobalStyle />
      <SystemBar />
      <BrowserWindow>
        <BrowserChrome />
        <Page>
          <SideNav />
          <Authors />
          <ScrollThumb />
        </Page>
      </BrowserWindow>
      <Dock />
    </Desktop>
  );
}
